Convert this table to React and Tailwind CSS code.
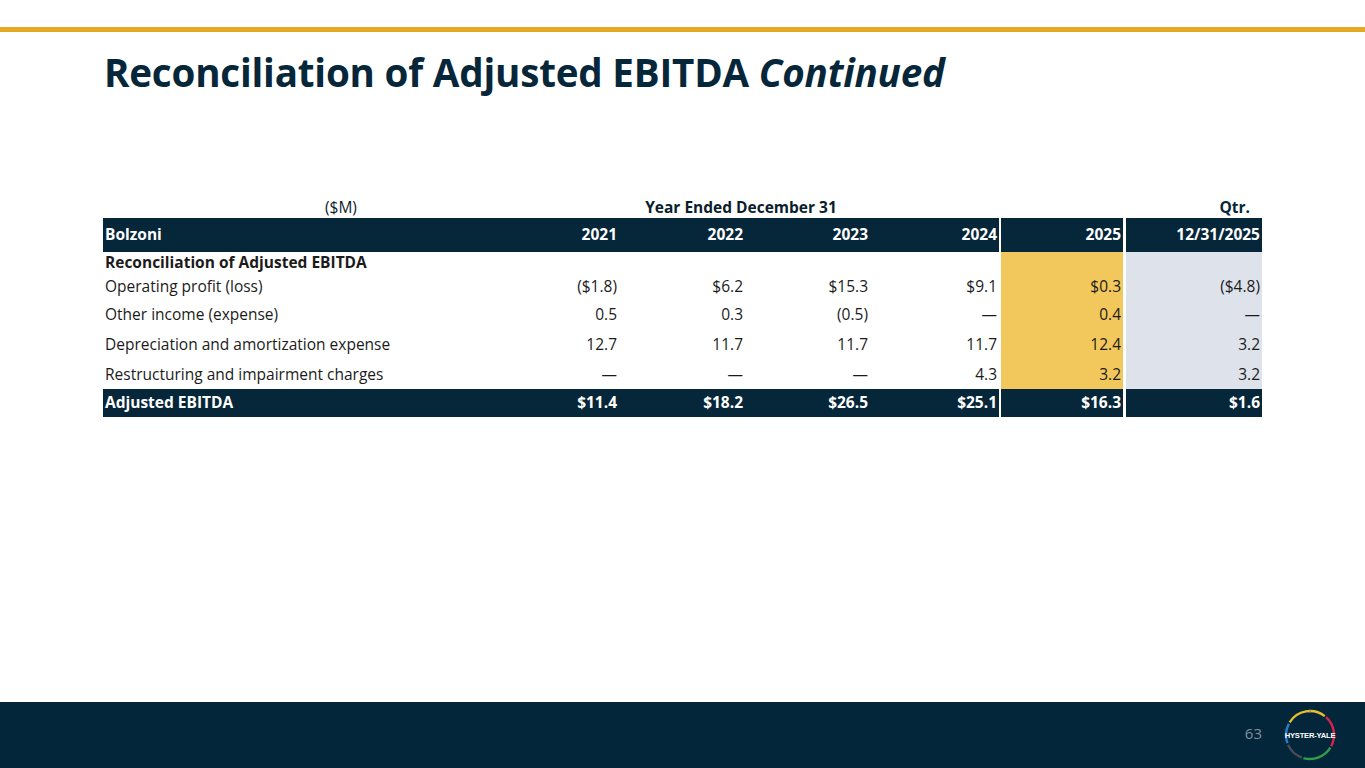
import React from 'react';

const NAVY = 'bg-[#06263a]';

const rows = [
  { label: 'Operating profit (loss)', vals: ['($1.8)', '$6.2', '$15.3', '$9.1'], y: '$0.3', q: '($4.8)', h: 'h-[26px]' },
  { label: 'Other income (expense)', vals: ['0.5', '0.3', '(0.5)', '—'], y: '0.4', q: '—', h: 'h-[30px]' },
  { label: 'Depreciation and amortization expense', vals: ['12.7', '11.7', '11.7', '11.7'], y: '12.4', q: '3.2', h: 'h-[30px]' },
  { label: 'Restructuring and impairment charges', vals: ['—', '—', '—', '4.3'], y: '3.2', q: '3.2', h: 'h-[29px]' },
];

const yearW = ['w-[126px]', 'w-[126px]', 'w-[125px]', 'w-[127px]'];

function Row({ h, label, vals, y, q, dark, bold, labelBold }) {
  const txt = dark ? 'text-white font-bold' : bold ? 'font-bold' : '';
  return (
    <div className={`flex ${h}`}>
      <div className={`w-[392px] flex items-center pl-[2px] ${dark ? NAVY : ''} ${txt} ${labelBold ? 'font-bold' : ''}`}>
        {label}
      </div>
      {vals.map((v, i) => (
        <div key={i} className={`${yearW[i]} flex items-center justify-end ${i === 3 ? 'pr-[2px]' : 'pr-[4px]'} ${dark ? NAVY : ''} ${txt}`}>
          {v}
        </div>
      ))}
      <div className="w-[2px]" />
      <div className={`w-[122px] flex items-center justify-end pr-[2px] ${dark ? NAVY : 'bg-[#f2c75c]'} ${txt}`}>
        {y}
      </div>
      <div className="w-[3px]" />
      <div className={`w-[136px] flex items-center justify-end pr-[2px] ${dark ? NAVY : 'bg-[#dee3eb]'} ${txt}`}>
        {q}
      </div>
    </div>
  );
}

function arc(cx, cy, r, a0, a1) {
  const rad = (a) => (a * Math.PI) / 180;
  const x0 = cx + r * Math.sin(rad(a0));
  const y0 = cy - r * Math.cos(rad(a0));
  const x1 = cx + r * Math.sin(rad(a1));
  const y1 = cy - r * Math.cos(rad(a1));
  const large = a1 - a0 > 180 ? 1 : 0;
  return `M ${x0} ${y0} A ${r} ${r} 0 ${large} 1 ${x1} ${y1}`;
}

function Logo() {
  // segments: start/end degrees clockwise from 12 o'clock
  const segs = [
    [-58, 38, '#e6c02c'],
    [42, 118, '#d3264e'],
    [122, 196, '#2f9e4c'],
    [200, 246, '#474c57'],
    [250, 298, '#2b7ccc'],
  ];
  return (
    <svg width="54" height="54" viewBox="0 0 54 54">
      {segs.map(([s, e, col], i) => (
        <path key={i} d={arc(27, 27, 24, s, e)} fill="none" stroke={col} strokeWidth="2.4" />
      ))}
      <line x1="27" y1="1.5" x2="27" y2="5" stroke="#8a8a6a" strokeWidth="1" />
      <text x="27" y="29.8" textAnchor="middle" fill="#fff" fontSize="7.6" fontWeight="700"
        fontFamily="'Liberation Sans', Arial, sans-serif" letterSpacing="-0.2">HYSTER-YALE</text>
    </svg>
  );
}

export default function App() {
  return (
    <div className="w-[1365px] h-[768px] bg-white flex flex-col text-[#1b1b1b] text-[15.5px]"
      style={{ fontFamily: "'Open Sans', 'Noto Sans', sans-serif" }}>
      <div className="h-[27px]" />
      <div className="h-[5px] bg-[#e5a823]" />

      <h1 className="pl-[104px] pt-[15px] text-[38.6px] leading-[50px] font-bold text-[#06263a] tracking-[-0.2px]">
        Reconciliation of Adjusted EBITDA <em>Continued</em>
      </h1>

      <div className="flex-1 pt-[101px] pl-[103px]">
        {/* Column group headers */}
        <div className="flex h-[20px] items-center text-[#0b1e2b]">
          <div className="w-[392px] pl-[222px]">($M)</div>
          <div className="w-[504px] flex justify-center font-bold pr-[12px]">Year Ended December 31</div>
          <div className="w-[127px]" />
          <div className="w-[136px] flex justify-end font-bold text-[#06263a] pr-[12px]">Qtr.</div>
        </div>

        {/* Header row */}
        <div className="flex h-[34px] text-white font-bold">
          <div className={`w-[392px] flex items-center pl-[2px] ${NAVY}`}>Bolzoni</div>
          {['2021', '2022', '2023', '2024'].map((y, i) => (
            <div key={y} className={`${yearW[i]} flex items-center justify-end ${i === 3 ? 'pr-[2px]' : 'pr-[4px]'} ${NAVY}`}>{y}</div>
          ))}
          <div className="w-[2px]" />
          <div className={`w-[122px] flex items-center justify-end pr-[2px] ${NAVY}`}>2025</div>
          <div className="w-[3px]" />
          <div className={`w-[136px] flex items-center justify-end pr-[2px] ${NAVY}`}>12/31/2025</div>
        </div>

        <Row h="h-[22px]" label="Reconciliation of Adjusted EBITDA" vals={['', '', '', '']} y="" q="" labelBold />
        {rows.map((r) => (
          <Row key={r.label} {...r} />
        ))}
        <Row h="h-[28px]" dark label="Adjusted EBITDA" vals={['$11.4', '$18.2', '$26.5', '$25.1']} y="$16.3" q="$1.6" />
      </div>

      <div className="h-[66px] bg-[#04263a] flex items-center justify-end pr-[28px]">
        <span className="text-[#7f8f9c] text-[15px] mr-[21px] -mt-[4px]">63</span>
        <Logo />
      </div>
    </div>
  );
}
